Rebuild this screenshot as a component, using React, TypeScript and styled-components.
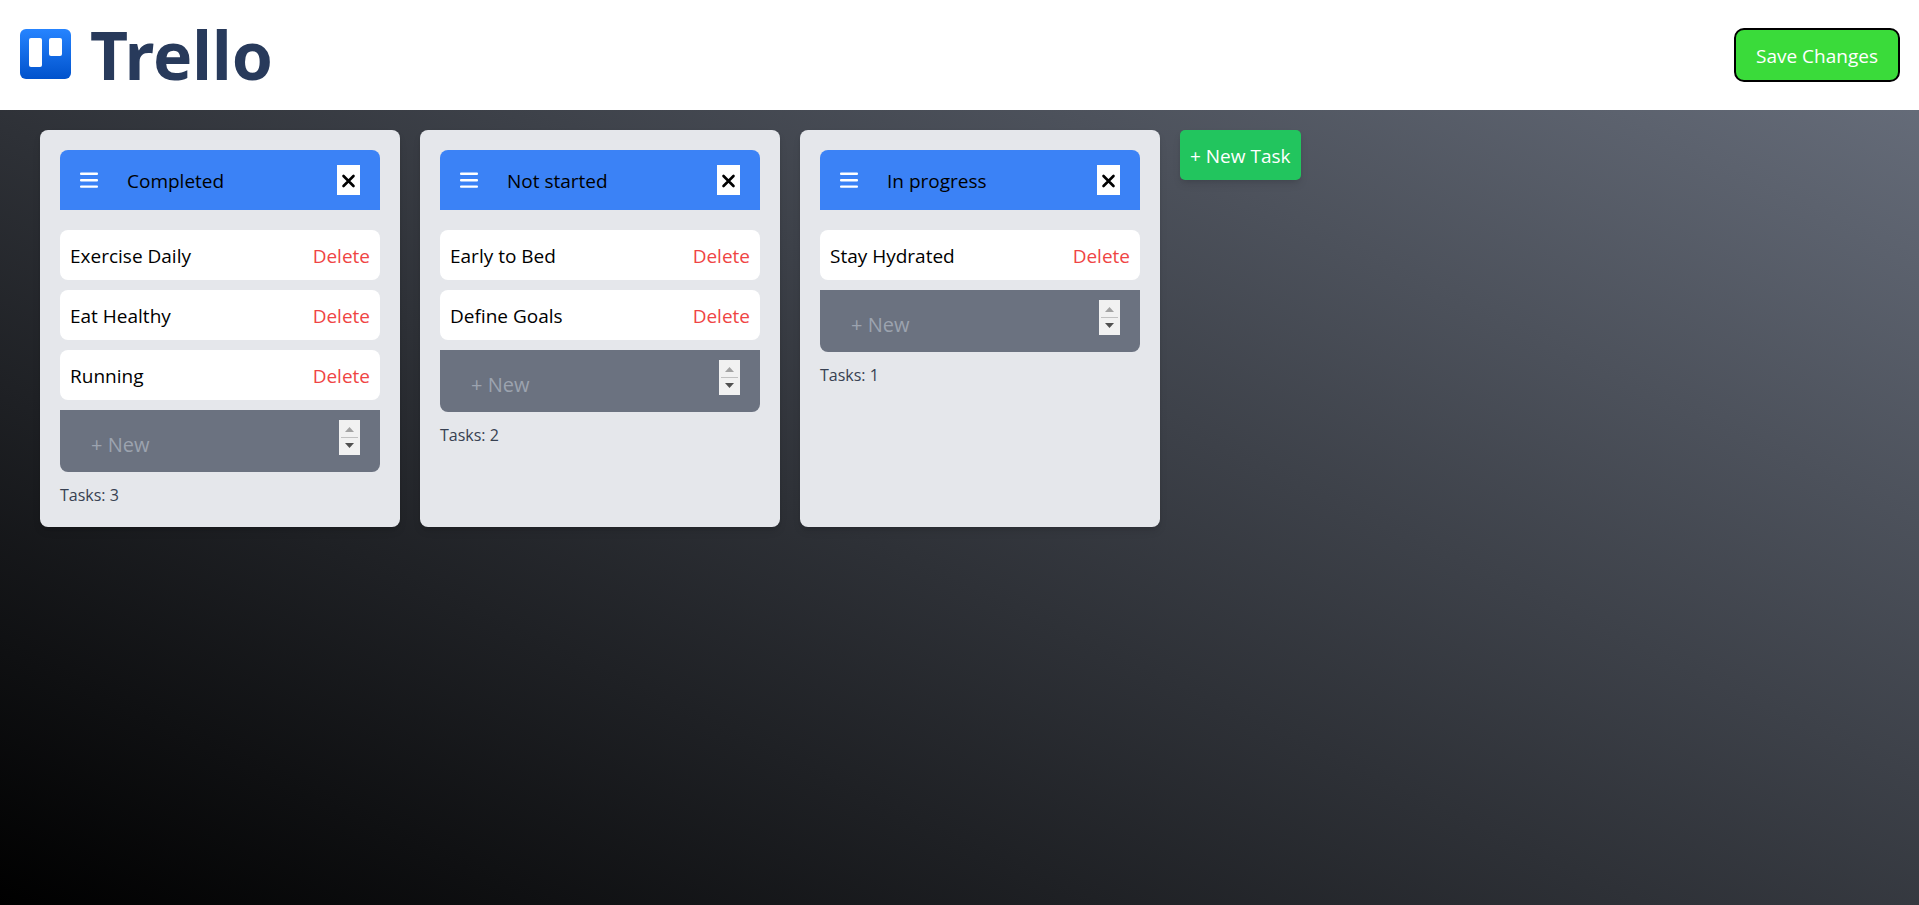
import React from "react";
import styled, { createGlobalStyle } from "styled-components";

const GlobalStyle = createGlobalStyle`
  *, *::before, *::after { box-sizing: border-box; }
  body {
    margin: 0;
    font-family: "Segoe UI", "Open Sans", sans-serif;
    font-size: 19px;
    line-height: 30px;
    color: #000;
  }
  button, textarea { font: inherit; color: inherit; }
  h1, h2, p, ul { margin: 0; padding: 0; font: inherit; }
`;

const Page = styled.div`
  min-height: 100vh;
  display: flex;
  flex-direction: column;
  background: linear-gradient(to top right, #000, #6b7280);
`;

const TopBar = styled.header`
  display: flex;
  align-items: center;
  justify-content: space-between;
  height: 110px;
  padding: 0 19px 0 20px;
  background: #fff;
`;

const Brand = styled.h1`
  display: flex;
  align-items: center;
  gap: 19px;
  padding-bottom: 2px;
  font-family: "Noto Sans", sans-serif;
  font-size: 66px;
  line-height: 106px;
  font-weight: 700;
  color: #283a5b;
`;

const SaveButton = styled.button`
  height: 54px;
  padding: 2px 20px 0;
  border: 2px solid #000;
  border-radius: 10px;
  background: #3adb3a;
  color: #fff;
  cursor: pointer;
`;

const Board = styled.main`
  display: flex;
  align-items: flex-start;
  gap: 20px;
  padding: 20px 40px;
`;

const Lists = styled.div`
  display: flex;
  gap: 20px;
`;

const Column = styled.section`
  width: 360px;
  padding: 20px;
  border-radius: 8px;
  background: #e5e7eb;
  box-shadow: 0 5px 8px -1px rgba(0, 0, 0, 0.1), 0 2px 5px -2px rgba(0, 0, 0, 0.1);
`;

const ColumnHeader = styled.div`
  display: flex;
  align-items: center;
  height: 60px;
  padding: 0 20px;
  border-radius: 8px 8px 0 0;
  background: #3b82f6;
`;

const ColumnTitle = styled.h2`
  flex: 1;
  padding: 1px 0 0 29px;
`;

const CloseButton = styled.button`
  display: grid;
  place-items: center;
  width: 23px;
  height: 30px;
  padding: 0;
  border: 0;
  background: #fff;
  cursor: pointer;
`;

const CardList = styled.ul`
  display: flex;
  flex-direction: column;
  gap: 10px;
  margin: 20px 0 10px;
  list-style: none;
`;

const Card = styled.li`
  display: flex;
  align-items: center;
  justify-content: space-between;
  height: 50px;
  padding: 1px 10px 0;
  border-radius: 8px;
  background: #fff;
`;

const DeleteButton = styled.button`
  padding: 0;
  border: 0;
  background: none;
  color: #ef4444;
  cursor: pointer;
`;

const Composer = styled.div`
  display: flex;
  align-items: flex-start;
  padding: 10px 20px;
  border-radius: 0 0 8px 8px;
  background: #6b7280;
`;

const NewCardInput = styled.textarea`
  flex: 1;
  min-width: 0;
  height: 42px;
  padding: 10px 10px 0 11px;
  border: 0;
  outline: 0;
  resize: none;
  overflow: hidden;
  background: none;
  color: #fff;
  font-size: 20px;
  &::placeholder { color: #9ca3af; opacity: 1; }
`;

const TaskCount = styled.p`
  margin-top: 11px;
  font-size: 16px;
  line-height: 24px;
  color: #374151;
`;

const NewTaskButton = styled.button`
  height: 50px;
  padding: 1px 10px 0;
  border: 0;
  border-radius: 5px;
  background: #22c55e;
  color: #fff;
  box-shadow: 0 5px 8px -1px rgba(0, 0, 0, 0.1), 0 2px 5px -2px rgba(0, 0, 0, 0.1);
  cursor: pointer;
`;

const Logo = () => (
  <svg width="51" height="50" viewBox="0 0 51 50" aria-hidden="true">
    <defs>
      <linearGradient id="logo" x1="0" y1="0" x2="0" y2="1">
        <stop offset="0" stopColor="#2684ff" />
        <stop offset="1" stopColor="#0052cc" />
      </linearGradient>
    </defs>
    <rect width="51" height="50" rx="6" fill="url(#logo)" />
    <rect x="9" y="9" width="13" height="29" rx="2" fill="#fff" />
    <rect x="29" y="9" width="13" height="18" rx="2" fill="#fff" />
  </svg>
);

const MenuIcon = () => (
  <svg width="18" height="18" viewBox="0 0 18 18" fill="#fff" aria-hidden="true">
    <rect y="1.5" width="18" height="2.4" rx="1" />
    <rect y="8" width="18" height="2.4" rx="1" />
    <rect y="14.4" width="18" height="2.4" rx="1" />
  </svg>
);

const CloseIcon = () => (
  <svg width="15" height="15" viewBox="0 0 15 15" aria-hidden="true">
    <path d="M2.5 3l10 10m0-10l-10 10" stroke="#000" strokeWidth="2.6" strokeLinecap="round" />
  </svg>
);

const Scroller = () => (
  <svg width="21" height="35" viewBox="0 0 21 35" aria-hidden="true">
    <rect width="21" height="35" fill="#f1f1f1" />
    <path d="M6 12l4.5-5 4.5 5z" fill="#a3a3a3" />
    <rect x="2" y="17" width="17" height="1" fill="#c1c1c1" />
    <path d="M6 23l4.5 5 4.5-5z" fill="#505050" />
  </svg>
);

const lists = [
  { title: "Completed", cards: ["Exercise Daily", "Eat Healthy", "Running"] },
  { title: "Not started", cards: ["Early to Bed", "Define Goals"] },
  { title: "In progress", cards: ["Stay Hydrated"] },
];

export default function App() {
  return (
    <Page>
      <GlobalStyle />
      <TopBar>
        <Brand>
          <Logo />
          Trello
        </Brand>
        <SaveButton type="button">Save Changes</SaveButton>
      </TopBar>
      <Board>
        <Lists>
          {lists.map(({ title, cards }) => (
            <Column key={title}>
              <ColumnHeader>
                <MenuIcon />
                <ColumnTitle>{title}</ColumnTitle>
                <CloseButton type="button" aria-label={`Remove ${title}`}>
                  <CloseIcon />
                </CloseButton>
              </ColumnHeader>
              <CardList>
                {cards.map((card) => (
                  <Card key={card}>
                    <span>{card}</span>
                    <DeleteButton type="button">Delete</DeleteButton>
                  </Card>
                ))}
              </CardList>
              <Composer>
                <NewCardInput placeholder="+ New" aria-label={`New card in ${title}`} />
                <Scroller />
              </Composer>
              <TaskCount>Tasks: {cards.length}</TaskCount>
            </Column>
          ))}
        </Lists>
        <NewTaskButton type="button">+ New Task</NewTaskButton>
      </Board>
    </Page>
  );
}
